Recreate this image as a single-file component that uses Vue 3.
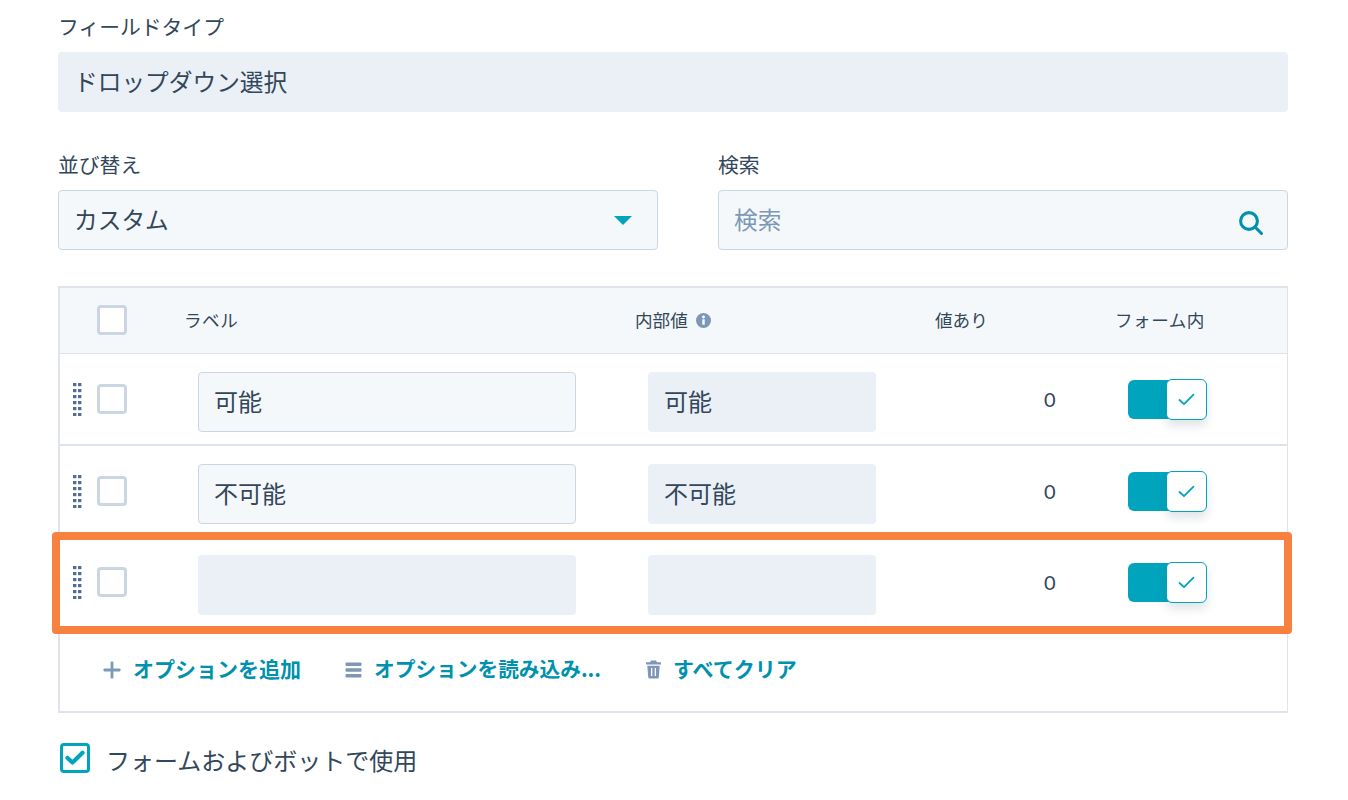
<script setup>
const rows = [
  { label: '可能', value: '可能', editable: true },
  { label: '不可能', value: '不可能', editable: true },
  { label: '', value: '', editable: false }
]
</script>

<template>
  <div class="page">
    <div class="field-type">
      <div class="label">フィールドタイプ</div>
      <div class="input disabled top">ドロップダウン選択</div>
    </div>

    <div class="filters">
      <div class="sort">
        <div class="label">並び替え</div>
        <div class="input editable between top">
          <span>カスタム</span>
          <span class="caret"></span>
        </div>
      </div>
      <div class="search">
        <div class="label">検索</div>
        <div class="input editable between top">
          <span class="placeholder">検索</span>
          <svg class="search-icon" width="24" height="24" viewBox="0 0 24 24" fill="none">
            <circle cx="10" cy="10" r="8.4" stroke="#0091ae" stroke-width="3.1" />
            <path d="M16 16L22.5 22.5" stroke="#0091ae" stroke-width="3.1" stroke-linecap="round" />
          </svg>
        </div>
      </div>
    </div>

    <div class="table">
      <div class="thead">
        <div class="col-handle"></div>
        <div class="col-check"><span class="check"></span></div>
        <div class="th col-label wide">ラベル</div>
        <div class="th col-value">
          内部値
          <svg class="info" width="15" height="15" viewBox="0 0 15 15">
            <circle cx="7.5" cy="7.5" r="7.5" fill="#7c98b6" />
            <rect x="6.3" y="6.3" width="2.4" height="5.4" fill="#fff" />
            <circle cx="7.5" cy="4" r="1.4" fill="#fff" />
          </svg>
        </div>
        <div class="th col-count">値あり</div>
        <div class="th col-form wide">フォーム内</div>
      </div>

      <div v-for="(row, i) in rows" :key="i" class="row" :class="'row-' + i">
        <div class="col-handle">
          <svg width="9" height="33" viewBox="0 0 9 33" fill="#516f90">
            <template v-for="n in 6" :key="n">
              <rect x="0" :y="(n - 1) * 6" width="3.4" height="3.2" />
              <rect x="5" :y="(n - 1) * 6" width="3.4" height="3.2" />
            </template>
          </svg>
        </div>
        <div class="col-check"><span class="check"></span></div>
        <div class="col-label">
          <div class="input cell" :class="row.editable ? 'editable' : 'disabled'">{{ row.label }}</div>
        </div>
        <div class="col-value">
          <div class="input cell disabled">{{ row.value }}</div>
        </div>
        <div class="count">0</div>
        <div class="col-form">
          <div class="toggle">
            <div class="toggle-knob">
              <svg width="17" height="13" viewBox="0 0 17 13" fill="none">
                <path d="M1.5 7L6 11.2L15.5 1.6" stroke="#00a4bd" stroke-width="1.8" stroke-linecap="round" stroke-linejoin="round" />
              </svg>
            </div>
          </div>
        </div>
      </div>

      <div class="actions">
        <div class="action add">
          <svg width="18" height="18" viewBox="0 0 18 18" fill="#7c98b6">
            <rect x="7.6" y="0.5" width="2.8" height="17" rx="1" />
            <rect x="0.5" y="7.6" width="17" height="2.8" rx="1" />
          </svg>
          <span>オプションを追加</span>
        </div>
        <div class="action load">
          <svg width="17" height="16" viewBox="0 0 17 16" fill="#7c98b6">
            <rect x="0.5" y="0.5" width="16" height="3.4" rx="1" />
            <rect x="0.5" y="6.3" width="16" height="3.4" rx="1" />
            <rect x="0.5" y="12.1" width="16" height="3.4" rx="1" />
          </svg>
          <span class="load-text">オプションを読み込み...</span>
        </div>
        <div class="action clear">
          <svg width="15" height="19" viewBox="0 0 15 19" fill="#7c98b6">
            <path d="M5 0.5h5l1 1.7h3.2a0.8 0.8 0 0 1 0 2.4H0.8a0.8 0.8 0 0 1 0-2.4H4z" />
            <path fill-rule="evenodd" d="M1.3 5.8h12.4l-0.9 11.4a1.6 1.6 0 0 1-1.6 1.4H3.8a1.6 1.6 0 0 1-1.6-1.4zM5 8v8h1.3V8zM8.7 8v8H10V8z" />
          </svg>
          <span>すべてクリア</span>
        </div>
      </div>

      <div class="highlight"></div>
    </div>

    <div class="use-in-form">
      <span class="checked">
        <svg width="20" height="16" viewBox="0 0 20 16" fill="none">
          <path d="M2.5 8L7.5 12.5L17.5 2.8" stroke="#00a4bd" stroke-width="4.2" stroke-linecap="round" stroke-linejoin="round" />
        </svg>
      </span>
      <span>フォームおよびボットで使用</span>
    </div>
  </div>
</template>

<style scoped>
.page {
  box-sizing: border-box;
  width: 1348px;
  height: 800px;
  padding: 11px 60px 0 58px;
  background: #fff;
  color: #33475b;
  font-family: "Noto Sans CJK JP", "Noto Sans", sans-serif;
  overflow: hidden;
}
.label {
  height: 31px;
  line-height: 31px;
  margin-bottom: 10px;
  font-size: 20.8px;
  white-space: nowrap;
}
.input {
  box-sizing: border-box;
  height: 60px;
  line-height: 56px;
  padding: 0 15px;
  font-size: 24px;
  border-radius: 4px;
  border: 1px solid transparent;
  white-space: nowrap;
}
.top {
  font-size: 23.7px;
}
.cell {
  margin-top: 6px;
}
.disabled {
  background: #eaf0f6;
}
.editable {
  background: #f5f8fa;
  border-color: #cbd6e2;
}
.between {
  display: flex;
  align-items: center;
  justify-content: space-between;
  padding-bottom: 2px;
}
.filters {
  display: flex;
  gap: 60px;
  margin-top: 37px;
}
.sort {
  width: 600px;
}
.search {
  width: 570px;
}
.caret {
  width: 0;
  height: 0;
  margin-top: 2px;
  margin-right: 10px;
  border-left: 9.5px solid transparent;
  border-right: 9.5px solid transparent;
  border-top: 9px solid #00a4bd;
}
.placeholder {
  color: #7c98b6;
}
.search-icon {
  margin-right: 9px;
  margin-top: 7px;
}
.table {
  position: relative;
  box-sizing: border-box;
  height: 427px;
  margin-top: 36px;
  border: 2px solid #dfe3eb;
  border-right-width: 1px;
}
.thead,
.row {
  display: flex;
  align-items: center;
}
.thead > *,
.row > * {
  flex: none;
}
.thead {
  height: 63px;
  padding-bottom: 2px;
  background: #f5f8fa;
  border-bottom: 1px solid #dfe3eb;
}
.row-0 {
  height: 90px;
  border-bottom: 2px solid #dfe3eb;
}
.row-1 {
  height: 90px;
}
.row-2 {
  height: 92px;
}
.col-handle {
  width: 13px;
  margin-left: 13px;
  display: flex;
  align-items: center;
}
.col-check {
  width: 30px;
  margin-left: 11px;
  display: flex;
}
.check {
  box-sizing: border-box;
  display: block;
  width: 30px;
  height: 30px;
  border: 3px solid #cbd6e2;
  border-radius: 4px;
  background: #fff;
}
.th {
  font-size: 17.6px;
  white-space: nowrap;
}
.wide {
  letter-spacing: 0.5px;
}
.thead .col-label {
  width: 451px;
  margin-left: 57px;
}
.row .col-label {
  width: 378px;
  margin-left: 71px;
}
.thead .col-value {
  width: 300px;
  display: flex;
  align-items: center;
  gap: 8px;
}
.row .col-value {
  width: 228px;
  margin-left: 72px;
}
.info {
  margin-top: 1px;
}
.thead .col-count {
  width: 180px;
}
.count {
  box-sizing: border-box;
  width: 252px;
  padding-left: 168px;
  font-family: Lato, "Noto Sans", sans-serif;
  font-size: 20px;
}
.toggle {
  position: relative;
  width: 78px;
  height: 39px;
  background: #00a4bd;
  border-radius: 6px;
}
.toggle-knob {
  position: absolute;
  right: -1px;
  top: -1px;
  box-sizing: border-box;
  width: 41px;
  height: 41px;
  background: #fff;
  border: 1.5px solid #00a4bd;
  border-radius: 6px;
  box-shadow: 0 6px 10px rgba(45, 62, 80, 0.14);
  display: flex;
  align-items: center;
  justify-content: center;
}
.actions {
  display: flex;
  align-items: center;
  height: 73px;
  margin-top: 3px;
  padding-left: 43px;
}
.action {
  display: flex;
  align-items: center;
  color: #0091ae;
  font-size: 21px;
  font-weight: 700;
  white-space: nowrap;
}
.action svg {
  margin-top: 4px;
}
.load-text {
  font-size: 20.7px;
}
.add {
  gap: 12px;
  margin-right: 44px;
}
.load {
  gap: 12px;
  margin-right: 45px;
}
.clear {
  gap: 12px;
}
.highlight {
  position: absolute;
  left: -8px;
  right: -5px;
  top: 244px;
  height: 102px;
  box-sizing: border-box;
  border: 8px solid #f9813f;
  border-radius: 4px;
  pointer-events: none;
}
.use-in-form {
  display: flex;
  align-items: center;
  gap: 16px;
  margin-top: 30px;
  margin-left: 2px;
  font-size: 24px;
  line-height: 34px;
  white-space: nowrap;
}
.checked {
  box-sizing: border-box;
  width: 30px;
  height: 30px;
  border: 3px solid #00a4bd;
  border-radius: 4px;
  display: flex;
  align-items: center;
  justify-content: center;
  margin-top: -4px;
}
</style>
